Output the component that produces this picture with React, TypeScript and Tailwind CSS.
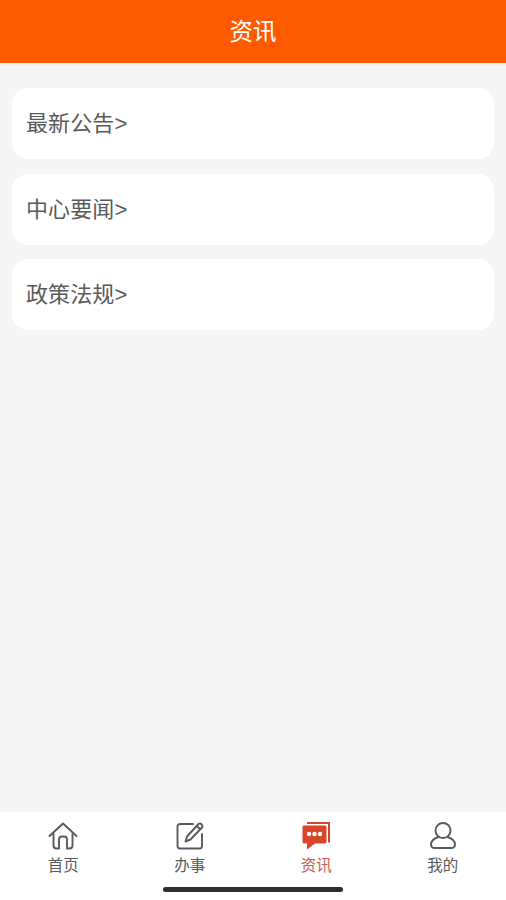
function Card({ t }: { t: string }) {
  return (
    <div className="h-[71px] rounded-[16px] bg-white flex items-center pl-[14px] text-[22px] tracking-[0.1px] text-[#5a5a5a]">
      {t}
    </div>
  );
}
function Tab({ label, active, children }: { label: string; active?: boolean; children: React.ReactNode }) {
  return (
    <div className="flex-1 flex flex-col items-center pt-[9px]">
      <div className="h-[30px] w-[30px]">{children}</div>
      <div className={"text-[15.5px] leading-[20px] mt-[5px] " + (active ? "text-[#c4604a]" : "text-[#5a5a5a]")}>{label}</div>
    </div>
  );
}
export default function App() {
  return (
    <div className="relative w-[506px] h-[900px] flex flex-col bg-[#f5f5f5] overflow-hidden font-['Liberation_Sans','Noto_Sans_CJK_SC',sans-serif]">
      <div className="h-[62.5px] shrink-0 bg-[#ff5a00] flex items-center justify-center pt-[2px] text-white text-[23.5px]">资讯</div>
      <div className="flex-1 px-[12px] pt-[25.5px] flex flex-col gap-[14.5px]">
        <Card t="最新公告>" />
        <Card t="中心要闻>" />
        <Card t="政策法规>" />
      </div>
      <div className="h-[88px] shrink-0 bg-white flex">
        <Tab label="首页">
          <svg viewBox="0 0 30 30" className="w-full h-full" fill="none" stroke="#5a5a5a" strokeWidth="1.9" strokeLinejoin="round" strokeLinecap="round">
            <path d="M1.5 15 15 2.5 28.5 15" />
            <path d="M5.5 13V24.5a3 3 0 0 0 3 3h2.5V18.5a3 3 0 0 1 3-3h2a3 3 0 0 1 3 3v9h2.5a3 3 0 0 0 3-3V13" />
          </svg>
        </Tab>
        <Tab label="办事">
          <svg viewBox="0 0 30 30" className="w-full h-full" fill="none" stroke="#5a5a5a" strokeWidth="1.9" strokeLinejoin="round" strokeLinecap="round">
            <path d="M18 3H5a2.5 2.5 0 0 0-2.5 2.5V25A2.5 2.5 0 0 0 5 27.5h19.5A2.5 2.5 0 0 0 27 25V13" />
            <path d="M10.5 20.5 12 15.5 23.5 3a1.8 1.8 0 0 1 2.6 0l.9.9a1.8 1.8 0 0 1 0 2.6L15.5 18.5z" />
            <path d="M21.8 5 25.2 8.2" />
          </svg>
        </Tab>
        <Tab label="资讯" active>
          <svg viewBox="0 0 30 30" className="w-full h-full">
            <path d="M6 1H29V21.5H27V3H6z" fill="#d9452a" />
            <path d="M3 4.5H24a1.5 1.5 0 0 1 1.5 1.5V21a1.5 1.5 0 0 1-1.5 1.5H14L6 28.5V22.5H3A1.5 1.5 0 0 1 1.5 21V6A1.5 1.5 0 0 1 3 4.5z" fill="#d9452a" />
            <circle cx="8" cy="13" r="2.2" fill="#fff" />
            <circle cx="13.5" cy="13" r="2.2" fill="#fff" />
            <circle cx="19" cy="13" r="2.2" fill="#fff" />
          </svg>
        </Tab>
        <Tab label="我的">
          <svg viewBox="0 0 30 30" className="w-full h-full" fill="none" stroke="#5a5a5a" strokeWidth="1.9">
            <circle cx="15" cy="9.5" r="7.5" />
            <path d="M10.5 16C6 17.5 3 20 3 23.5c0 2.2 1.5 3.5 4 3.5h16c2.5 0 4-1.3 4-3.5 0-3.5-3-6-7.5-7.5" strokeLinecap="round" />
          </svg>
        </Tab>
      </div>
      <div className="absolute left-[163px] top-[887px] w-[180px] h-[5px] rounded-full bg-[#2e2e2e]" />
    </div>
  );
}
